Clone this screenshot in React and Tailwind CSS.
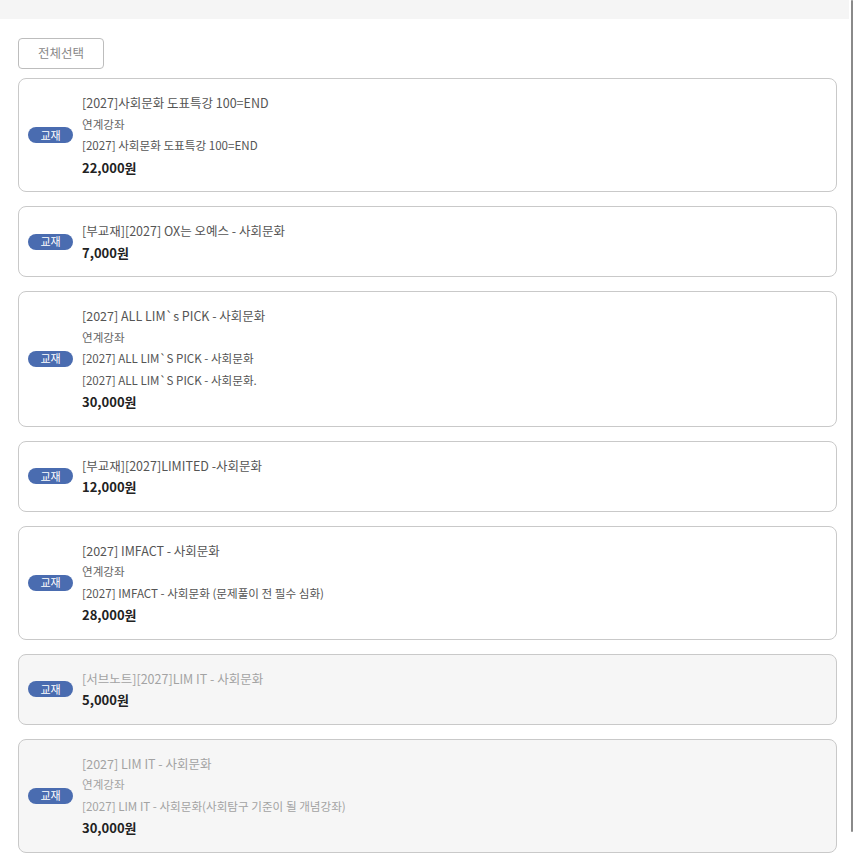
import React from 'react';

const items = [
  {
    title: '[2027]사회문화 도표특강 100=END',
    linked: ['[2027] 사회문화 도표특강 100=END'],
    price: '22,000원',
  },
  {
    title: '[부교재][2027] OX는 오예스 - 사회문화',
    price: '7,000원',
  },
  {
    title: '[2027] ALL LIM`s PICK - 사회문화',
    linked: ['[2027] ALL LIM`S PICK - 사회문화', '[2027] ALL LIM`S PICK - 사회문화.'],
    price: '30,000원',
  },
  {
    title: '[부교재][2027]LIMITED -사회문화',
    price: '12,000원',
  },
  {
    title: '[2027] IMFACT - 사회문화',
    linked: ['[2027] IMFACT - 사회문화 (문제풀이 전 필수 심화)'],
    price: '28,000원',
  },
  {
    title: '[서브노트][2027]LIM IT - 사회문화',
    price: '5,000원',
    soldOut: true,
  },
  {
    title: '[2027] LIM IT - 사회문화',
    linked: ['[2027] LIM IT - 사회문화(사회탐구 기준이 될 개념강좌)'],
    price: '30,000원',
    soldOut: true,
  },
];

function BookCard({ item }) {
  const muted = item.soldOut;
  return (
    <div
      className={`flex items-center rounded-[8px] border border-[#c9c9c9] py-[13px] pl-[9px] pr-4 ${
        muted ? 'bg-[#f6f6f6]' : 'bg-white'
      }`}
    >
      <span className="flex h-[16px] w-[45px] shrink-0 items-center justify-center rounded-full bg-[#4a6cb0] text-[11px] leading-none text-white">
        교재
      </span>
      <div className="ml-[9px] flex flex-col text-[12.5px] leading-[21.5px]">
        <p className={muted ? 'text-[#a3a3a3]' : 'text-[#555]'}>{item.title}</p>
        {item.linked && (
          <>
            <p className={`text-[11.6px] ${muted ? 'text-[#a3a3a3]' : 'text-[#666]'}`}>연계강좌</p>
            {item.linked.map((l) => (
              <p key={l} className={`text-[11.6px] ${muted ? 'text-[#a3a3a3]' : 'text-[#555]'}`}>
                {l}
              </p>
            ))}
          </>
        )}
        <p className="text-[13px] font-semibold text-[#222]">{item.price}</p>
      </div>
    </div>
  );
}

export default function App() {
  return (
    <div
      className="relative min-h-[856px] w-[856px] overflow-hidden bg-white"
      style={{ fontFamily: '"Noto Sans CJK KR", "Noto Sans", sans-serif' }}
    >
      <div className="h-[19px] w-[849px] bg-[#f5f5f5]" />
      <div className="w-[837px] pl-[18px] pt-[19px]">
        <button className="h-[31px] w-[86px] rounded-[4px] border border-[#bdbdbd] bg-white text-[12.5px] text-[#888]">
          전체선택
        </button>
        <div className="mt-[9px] flex flex-col gap-[14px]">
          {items.map((item) => (
            <BookCard key={item.title} item={item} />
          ))}
        </div>
      </div>
      {/* scrollbar thumb */}
      <div className="absolute left-[851px] top-0 h-[832px] w-[2px] rounded-full bg-[#8a8a8a]" />
    </div>
  );
}
